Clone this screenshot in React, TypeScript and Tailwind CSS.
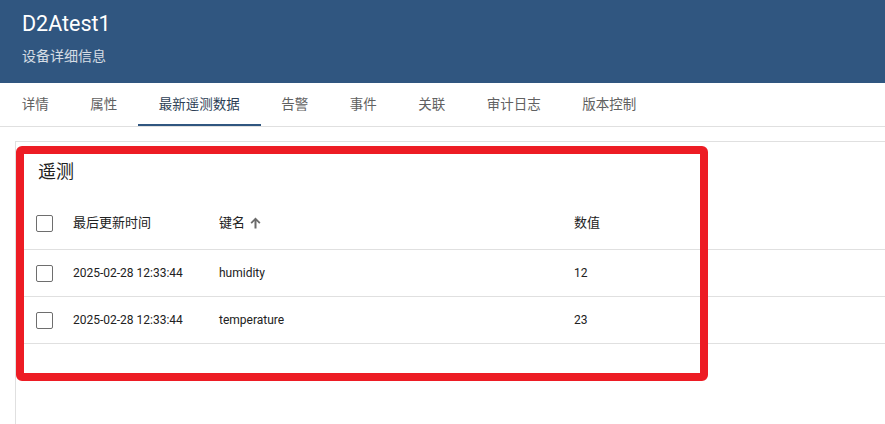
import React from 'react';

const tabs = ['详情', '属性', '最新遥测数据', '告警', '事件', '关联', '审计日志', '版本控制'];

const rows = [
  { ts: '2025-02-28 12:33:44', key: 'humidity', value: '12' },
  { ts: '2025-02-28 12:33:44', key: 'temperature', value: '23' },
];

function Checkbox() {
  return <div className="w-[17px] h-[17px] rounded-[2px] border border-[#6e6e6e] bg-white" />;
}

export default function App() {
  return (
    <div
      className="relative w-full h-[424px] overflow-hidden bg-white flex flex-col"
      style={{ fontFamily: 'Roboto, "Noto Sans CJK SC", sans-serif' }}
    >
      {/* Header */}
      <div className="h-[83px] shrink-0 bg-[#305680] px-[22px] pt-[10px] flex flex-col">
        <div className="text-[21.5px] leading-[28px] text-white">D2Atest1</div>
        <div className="mt-[8px] text-[14px] leading-[20px] text-white/80">设备详细信息</div>
      </div>

      {/* Tabs */}
      <div className="h-[44px] shrink-0 flex items-stretch pl-[1px] border-b border-[#e0e0e0]">
        {tabs.map((t, i) => (
          <div
            key={t}
            className={
              i === 2
                ? 'px-[20.75px] flex items-center text-[13.5px] text-[#2c3e55] border-b-2 border-[#305680] pt-[2px]'
                : 'px-[20.75px] flex items-center text-[13.5px] text-[#616161]'
            }
          >
            {t}
          </div>
        ))}
      </div>

      {/* Content */}
      <div className="flex-1 min-h-0 pt-[14px] pl-[15px] flex">
        <div className="flex-1 border-l border-t border-[#e0e0e0] flex flex-col">
          <div className="pl-[22px] pt-[18px] pb-[10px] text-[18px] leading-[24px] text-[#212121]">遥测</div>

          {/* Table header */}
          <div className="h-[56px] pt-[3px] flex items-center border-b border-[#e0e0e0] text-[13px] text-[#212121]">
            <div className="w-[57px] pl-[20px] flex items-center"><Checkbox /></div>
            <div className="w-[146px]">最后更新时间</div>
            <div className="w-[355px] flex items-center gap-[5px]">
              <span>键名</span>
              <svg width="11" height="12" viewBox="0 0 11 12" className="text-[#6b6b6b]">
                <path fill="currentColor" d="M5.5 0.5L10.5 5.5L9.2 6.8L6.5 4.1V11.5H4.5V4.1L1.8 6.8L0.5 5.5Z" />
              </svg>
            </div>
            <div>数值</div>
          </div>

          {rows.map((r) => (
            <div key={r.key} className="h-[47px] flex items-center border-b border-[#e0e0e0] text-[12px] text-[#212121]">
              <div className="w-[57px] pl-[20px] flex items-center"><Checkbox /></div>
              <div className="w-[146px]">{r.ts}</div>
              <div className="w-[355px]">{r.key}</div>
              <div>{r.value}</div>
            </div>
          ))}
        </div>
      </div>

      {/* Red highlight annotation */}
      <div className="absolute left-[16px] top-[146px] w-[692px] h-[235px] border-[8px] border-[#ed1c24] rounded-[6px] pointer-events-none" />
    </div>
  );
}
